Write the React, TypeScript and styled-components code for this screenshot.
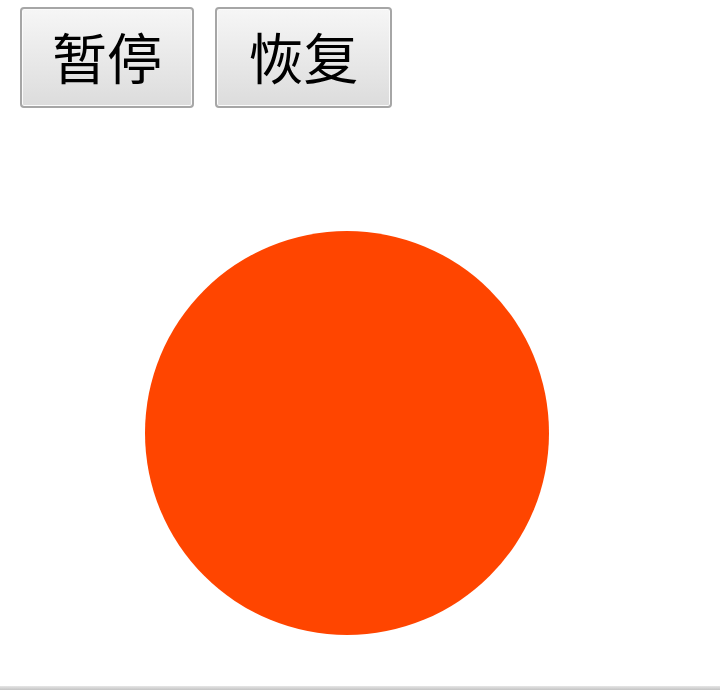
import React from "react";
import styled, { createGlobalStyle } from "styled-components";

const Global = createGlobalStyle`
  html, body { margin: 0; padding: 0; background: #ffffff; }
  body { font-family: "Noto Sans CJK SC", "Noto Sans", sans-serif; }
`;

const Page = styled.div`
  height: 690px;
  display: flex;
  flex-direction: column;
  overflow: hidden;
`;

const Toolbar = styled.div`
  display: flex;
  gap: 21px;
  padding: 7px 0 0 20px;
`;

const Button = styled.button<{ $width: number }>`
  width: ${(p) => p.$width}px;
  height: 101px;
  padding: 0 0 4px 0;
  border: 2px solid #a6a6a6;
  border-radius: 4px;
  background: linear-gradient(#f6f6f6, #dcdcdc);
  box-shadow: inset 0 0 0 1px #fbfbfb;
  color: #000;
  font-family: "Noto Sans CJK SC", "Noto Sans", sans-serif;
  font-size: 55px;
  line-height: 1;
  display: flex;
  align-items: center;
  justify-content: center;
`;

const Stage = styled.div`
  padding: 123px 0 0 145px;
  flex: 1;
`;

const Ball = styled.div<{ $size: number; $color: string }>`
  width: ${(p) => p.$size}px;
  height: ${(p) => p.$size}px;
  border-radius: 50%;
  background: ${(p) => p.$color};
`;

const BottomEdge = styled.div`
  height: 4px;
  background: linear-gradient(#e6e6e6, #c4c4c4);
`;

export default function App() {
  return (
    <Page>
      <Global />
      <Toolbar>
        <Button $width={174}>暂停</Button>
        <Button $width={177}>恢复</Button>
      </Toolbar>
      <Stage>
        <Ball $size={404} $color="#ff4500" />
      </Stage>
      <BottomEdge />
    </Page>
  );
}
